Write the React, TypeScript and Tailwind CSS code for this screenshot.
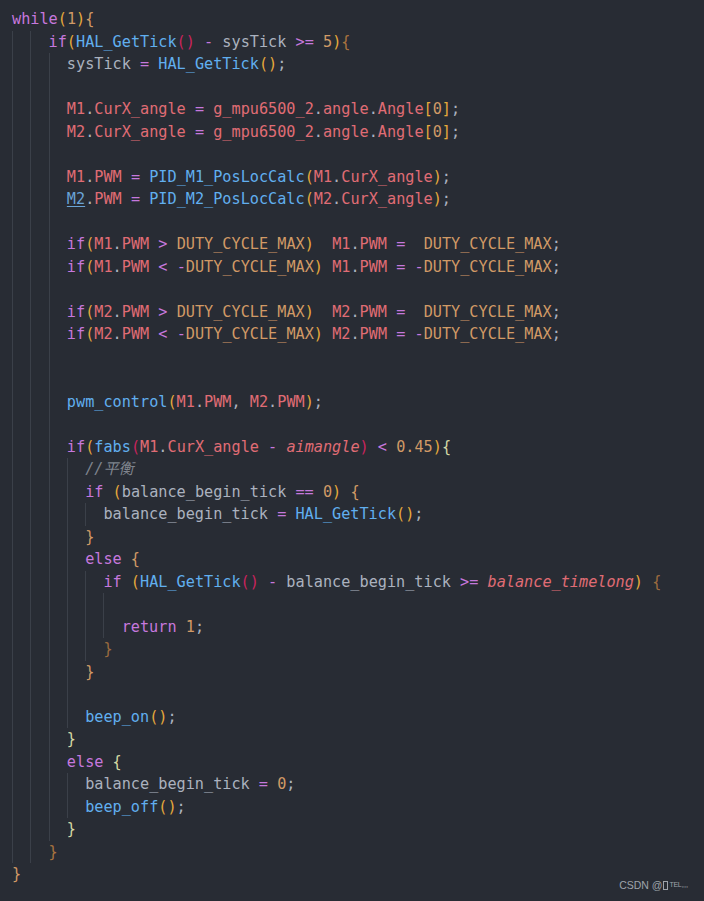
type Tok = [keyof typeof C, string];

const C = {
  kw: "text-[#c678dd]",
  fn: "text-[#61afef]",
  vr: "text-[#e06c75]",
  pl: "text-[#abb2bf]",
  nm: "text-[#d19a66]",
  op: "text-[#c678dd]",
  it: "text-[#e06c75] italic",
  cm: "text-[#7f848e] italic",
  p1: "text-[#e5a93c]",
  p2: "text-[#c8245e]",
  b1: "text-[#d19a66]",
  b2: "text-[#a8733f]",
  b3: "text-[#d4d9a4]",
  b4: "text-[#9b6b3f]",
  ln: "text-[#6aa3d6] underline decoration-[#6aa3d6] underline-offset-2",
};

// [guides, tokens]
const lines: [number, Tok[]][] = [
  [0, [["kw", "while"], ["p1", "("], ["nm", "1"], ["p1", ")"], ["b1", "{"]]],
  [2, [["kw", "if"], ["p1", "("], ["fn", "HAL_GetTick"], ["p2", "()"], ["pl", " "], ["op", "-"], ["pl", " sysTick "], ["op", ">="], ["pl", " "], ["nm", "5"], ["p1", ")"], ["b2", "{"]]],
  [3, [["pl", "sysTick "], ["op", "="], ["pl", " "], ["fn", "HAL_GetTick"], ["p1", "()"], ["pl", ";"]]],
  [3, []],
  [3, [["vr", "M1"], ["pl", "."], ["vr", "CurX_angle"], ["pl", " "], ["op", "="], ["pl", " "], ["vr", "g_mpu6500_2"], ["pl", "."], ["vr", "angle"], ["pl", "."], ["vr", "Angle"], ["p1", "["], ["nm", "0"], ["p1", "]"], ["pl", ";"]]],
  [3, [["vr", "M2"], ["pl", "."], ["vr", "CurX_angle"], ["pl", " "], ["op", "="], ["pl", " "], ["vr", "g_mpu6500_2"], ["pl", "."], ["vr", "angle"], ["pl", "."], ["vr", "Angle"], ["p1", "["], ["nm", "0"], ["p1", "]"], ["pl", ";"]]],
  [3, []],
  [3, [["vr", "M1"], ["pl", "."], ["vr", "PWM"], ["pl", " "], ["op", "="], ["pl", " "], ["fn", "PID_M1_PosLocCalc"], ["p1", "("], ["vr", "M1"], ["pl", "."], ["vr", "CurX_angle"], ["p1", ")"], ["pl", ";"]]],
  [3, [["ln", "M2"], ["pl", "."], ["vr", "PWM"], ["pl", " "], ["op", "="], ["pl", " "], ["fn", "PID_M2_PosLocCalc"], ["p1", "("], ["vr", "M2"], ["pl", "."], ["vr", "CurX_angle"], ["p1", ")"], ["pl", ";"]]],
  [3, []],
  [3, [["kw", "if"], ["p1", "("], ["vr", "M1"], ["pl", "."], ["vr", "PWM"], ["pl", " "], ["op", ">"], ["pl", " "], ["nm", "DUTY_CYCLE_MAX"], ["p1", ")"], ["pl", "  "], ["vr", "M1"], ["pl", "."], ["vr", "PWM"], ["pl", " "], ["op", "="], ["pl", "  "], ["nm", "DUTY_CYCLE_MAX"], ["pl", ";"]]],
  [3, [["kw", "if"], ["p1", "("], ["vr", "M1"], ["pl", "."], ["vr", "PWM"], ["pl", " "], ["op", "<"], ["pl", " "], ["op", "-"], ["nm", "DUTY_CYCLE_MAX"], ["p1", ")"], ["pl", " "], ["vr", "M1"], ["pl", "."], ["vr", "PWM"], ["pl", " "], ["op", "="], ["pl", " "], ["op", "-"], ["nm", "DUTY_CYCLE_MAX"], ["pl", ";"]]],
  [3, []],
  [3, [["kw", "if"], ["p1", "("], ["vr", "M2"], ["pl", "."], ["vr", "PWM"], ["pl", " "], ["op", ">"], ["pl", " "], ["nm", "DUTY_CYCLE_MAX"], ["p1", ")"], ["pl", "  "], ["vr", "M2"], ["pl", "."], ["vr", "PWM"], ["pl", " "], ["op", "="], ["pl", "  "], ["nm", "DUTY_CYCLE_MAX"], ["pl", ";"]]],
  [3, [["kw", "if"], ["p1", "("], ["vr", "M2"], ["pl", "."], ["vr", "PWM"], ["pl", " "], ["op", "<"], ["pl", " "], ["op", "-"], ["nm", "DUTY_CYCLE_MAX"], ["p1", ")"], ["pl", " "], ["vr", "M2"], ["pl", "."], ["vr", "PWM"], ["pl", " "], ["op", "="], ["pl", " "], ["op", "-"], ["nm", "DUTY_CYCLE_MAX"], ["pl", ";"]]],
  [3, []],
  [3, []],
  [3, [["fn", "pwm_control"], ["p1", "("], ["vr", "M1"], ["pl", "."], ["vr", "PWM"], ["pl", ", "], ["vr", "M2"], ["pl", "."], ["vr", "PWM"], ["p1", ")"], ["pl", ";"]]],
  [3, []],
  [3, [["kw", "if"], ["p1", "("], ["fn", "fabs"], ["p2", "("], ["vr", "M1"], ["pl", "."], ["vr", "CurX_angle"], ["pl", " "], ["op", "-"], ["pl", " "], ["it", "aimangle"], ["p2", ")"], ["pl", " "], ["op", "<"], ["pl", " "], ["nm", "0.45"], ["p1", ")"], ["b3", "{"]]],
  [4, [["cm", "//平衡"]]],
  [4, [["kw", "if"], ["pl", " "], ["p1", "("], ["pl", "balance_begin_tick "], ["op", "=="], ["pl", " "], ["nm", "0"], ["p1", ")"], ["pl", " "], ["b1", "{"]]],
  [5, [["pl", "balance_begin_tick "], ["op", "="], ["pl", " "], ["fn", "HAL_GetTick"], ["p1", "()"], ["pl", ";"]]],
  [4, [["b1", "}"]]],
  [4, [["kw", "else"], ["pl", " "], ["b1", "{"]]],
  [5, [["kw", "if"], ["pl", " "], ["p1", "("], ["fn", "HAL_GetTick"], ["p2", "()"], ["pl", " "], ["op", "-"], ["pl", " balance_begin_tick "], ["op", ">="], ["pl", " "], ["it", "balance_timelong"], ["p1", ")"], ["pl", " "], ["b4", "{"]]],
  [6, []],
  [6, [["kw", "return"], ["pl", " "], ["nm", "1"], ["pl", ";"]]],
  [5, [["b4", "}"]]],
  [4, [["b1", "}"]]],
  [4, []],
  [4, [["fn", "beep_on"], ["p1", "()"], ["pl", ";"]]],
  [3, [["b3", "}"]]],
  [3, [["kw", "else"], ["pl", " "], ["b3", "{"]]],
  [4, [["pl", "balance_begin_tick "], ["op", "="], ["pl", " "], ["nm", "0"], ["pl", ";"]]],
  [4, [["fn", "beep_off"], ["p1", "()"], ["pl", ";"]]],
  [3, [["b3", "}"]]],
  [2, [["b2", "}"]]],
  [0, [["b1", "}"]]],
];

const CodeLine = ({ guides, toks }: { guides: number; toks: Tok[] }) => (
  <div className="flex h-[22.5px] leading-[22.5px] whitespace-pre">
    {Array.from({ length: guides }).map((_, i) => (
      <span key={i} className="w-[2ch] shrink-0 border-l border-[#3b4049]" />
    ))}
    <span>
      {toks.map(([t, s], i) => (
        <span key={i} className={C[t]}>
          {s}
        </span>
      ))}
    </span>
  </div>
);

export default function App() {
  return (
    <div className="relative h-[901px] w-full overflow-hidden bg-[#282c34]">
      <div className="pl-[12px] pt-[8px] font-['DejaVu_Sans_Mono','Noto_Sans_CJK_SC',monospace] text-[15.2px] text-[#abb2bf]">
        {lines.map(([g, toks], i) => (
          <CodeLine key={i} guides={g} toks={toks} />
        ))}
      </div>
      <div className="absolute bottom-[10px] right-[16px] flex items-center font-['Liberation_Sans',sans-serif] text-[10.5px] leading-[12px] text-[#9ea3aa]">
        <span>CSDN @</span>
        <span className="ml-[1px] mr-[1px] inline-block h-[9px] w-[5px] border border-[#9ea3aa]" />
        <span className="text-[7px] leading-[12px] tracking-[-0.3px]">TEL,,,,</span>
      </div>
    </div>
  );
}
